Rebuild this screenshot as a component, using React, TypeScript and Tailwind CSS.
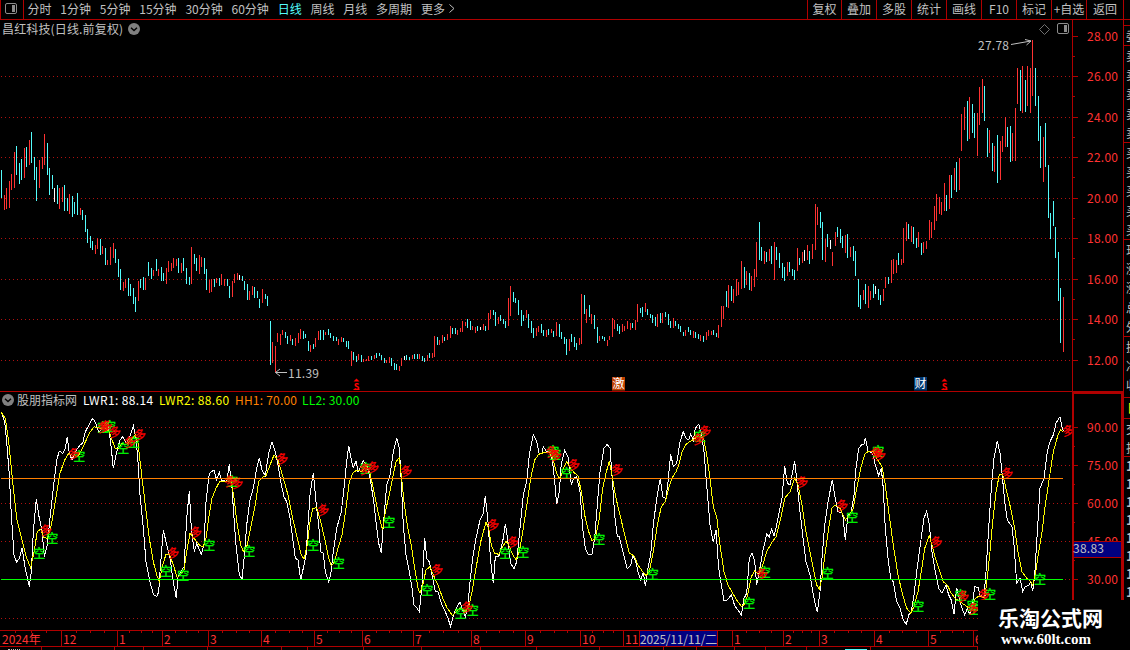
import type { ReactNode } from "react";

const FONT = "font-['Noto_Sans_CJK_SC','Liberation_Sans',sans-serif]";

const RED = "#ff3232";
const CYAN = "#54fcfc";
const LINE = "#b00000";
const GREY = "#c0c0c0";

const periods = ["分时", "1分钟", "5分钟", "15分钟", "30分钟", "60分钟", "日线", "周线", "月线", "多周期"];

const actions = [
  { label: "复权", width: "w-[34px]" },
  { label: "叠加", width: "w-[35px]" },
  { label: "多股", width: "w-[35px]" },
  { label: "统计", width: "w-[35px]" },
  { label: "画线", width: "w-[35px]" },
  { label: "F10", width: "w-[35px]" },
  { label: "标记", width: "w-[35px]" },
  { label: "+自选", width: "w-[35px]" },
  { label: "返回", width: "w-[37px]" },
];

// each bar: x high low colour (r = up, c = down, w = flat)
const bars = `
1 170 198 c,4 195 210 r,6 188 209 r,9 181 208 r,11 174 190 r,14 152 188 r,16 146 175 c,19 163 184 c,21 159 180 c,24 148 178 r,
26 147 167 c,29 140 165 r,31 132 163 c,34 157 180 c,36 167 201 c,39 160 188 r,42 157 169 r,44 134 165 r,47 143 175 c,49 168 195 c,
52 175 189 c,54 188 202 w,57 185 204 c,59 188 209 r,62 187 202 r,64 185 211 c,67 198 211 c,69 194 214 r,72 196 217 c,74 202 214 c,
77 193 215 c,80 208 215 r,82 210 220 c,85 215 232 c,87 229 243 c,90 236 248 c,92 241 250 c,95 245 254 r,97 238 249 r,100 239 255 c,
102 246 254 r,105 248 265 c,107 260 265 r,110 247 265 r,113 243 258 r,115 249 263 c,118 259 277 c,120 269 290 c,123 282 291 r,125 279 288 r,
128 278 296 c,130 284 296 c,133 288 304 c,135 297 312 c,138 281 301 r,140 279 288 c,143 277 290 c,145 278 290 r,148 262 276 c,151 268 279 c,
153 270 276 r,156 259 271 c,158 269 276 r,161 267 281 c,163 273 281 c,166 268 284 r,168 261 272 r,171 263 271 r,173 258 268 r,176 259 266 r,
178 258 273 c,181 263 273 r,183 258 271 c,186 268 284 c,189 277 285 c,191 247 284 r,194 254 264 c,196 258 271 c,199 255 274 r,201 257 267 r,
204 258 274 c,206 269 290 c,209 280 293 r,211 279 292 r,214 279 287 c,216 278 283 r,219 278 286 c,221 274 285 r,224 279 286 r,227 279 286 c,
229 286 298 c,232 281 297 r,234 274 283 r,237 273 280 r,239 275 280 w,242 276 281 c,244 281 290 c,247 284 300 c,249 291 300 r,252 286 295 r,
254 287 298 c,257 291 298 c,259 299 308 c,262 289 303 r,265 294 299 c,267 296 306 c,270 321 365 c,272 342 363 r,275 346 372 r,277 333 342 r,
280 334 345 r,282 330 335 r,285 332 338 c,287 336 344 c,290 335 341 r,292 339 345 c,295 338 346 r,298 333 343 r,300 329 339 r,303 331 339 c,
305 334 338 c,308 341 351 c,310 345 352 r,313 344 349 c,315 338 347 r,318 331 340 r,320 330 340 c,323 330 340 c,325 332 335 r,328 329 335 c,
330 333 338 c,333 336 341 c,336 337 341 c,338 339 345 r,341 337 342 r,343 338 342 c,346 341 347 c,348 341 349 c,351 351 366 r,353 352 360 c,
356 356 362 c,358 354 360 r,361 355 362 c,363 359 362 r,366 359 361 r,368 356 361 r,371 356 360 c,374 355 359 r,376 353 358 c,379 353 356 c,
381 355 360 c,384 358 363 c,386 360 363 r,389 357 363 r,391 358 366 c,394 363 370 c,396 364 370 c,399 366 371 r,401 358 366 r,404 356 360 w,
406 355 360 c,409 357 360 c,412 355 359 r,414 354 359 c,417 354 359 c,419 354 359 r,422 356 361 c,424 358 362 c,427 355 361 r,429 353 358 c,
432 353 358 r,434 336 357 r,437 337 345 c,439 340 345 r,442 335 343 r,444 337 341 c,447 334 340 r,450 326 338 r,452 328 334 c,455 328 334 c,
457 330 335 r,460 328 332 r,462 321 332 r,465 322 326 r,467 319 328 c,470 321 330 c,472 326 330 r,475 327 333 r,477 326 331 c,480 327 330 w,
483 324 330 r,485 326 331 c,488 313 330 r,490 310 319 r,493 310 315 c,495 312 326 c,498 317 324 r,500 315 321 c,503 319 324 c,505 321 328 c,
508 298 326 r,510 286 316 r,513 292 302 c,515 298 303 c,518 300 315 c,521 310 326 c,523 315 321 c,526 310 318 r,528 314 328 c,531 321 333 c,
533 328 338 c,536 328 336 r,538 326 332 r,541 324 333 c,543 330 336 c,546 330 337 r,548 329 335 c,551 329 333 r,553 331 337 c,556 322 336 r,
559 324 337 c,561 332 339 c,564 337 344 c,566 339 355 c,569 339 351 r,571 334 342 c,574 337 347 c,576 343 350 c,579 338 345 r,581 294 344 r,
584 295 314 c,586 309 323 r,589 305 317 c,591 314 324 r,594 315 329 c,597 327 343 c,599 336 341 r,602 336 339 c,604 337 341 c,607 340 346 r,
609 336 340 r,612 318 337 r,614 320 329 r,617 324 331 c,619 326 334 c,622 324 332 r,624 326 331 r,627 321 329 r,630 323 330 r,632 323 328 c,
635 320 330 r,637 304 322 r,640 308 313 c,642 307 317 c,645 303 312 r,647 309 315 c,650 314 318 c,652 315 323 c,655 317 326 c,657 314 327 r,
660 313 323 c,662 313 323 r,665 312 317 c,668 314 325 c,670 321 328 c,673 318 328 r,675 321 326 c,678 324 329 c,680 326 332 c,683 332 336 c,
685 330 336 r,688 327 332 c,690 330 335 c,693 331 338 r,695 332 338 c,698 334 339 c,700 335 341 r,703 336 342 c,706 332 340 r,708 330 336 r,
711 331 335 r,713 330 335 c,716 333 337 c,718 325 338 r,721 306 327 r,723 306 319 r,726 291 307 c,728 285 308 r,731 286 301 c,733 289 303 r,
736 279 296 r,738 282 295 r,741 261 289 r,744 267 288 c,746 271 285 r,749 273 290 c,751 276 291 r,754 269 287 r,756 242 277 r,759 222 260 c,
761 247 261 c,764 251 264 r,766 252 262 c,769 249 261 r,771 246 264 c,774 242 280 r,776 247 260 c,779 253 268 c,782 263 278 c,784 267 281 c,
787 262 276 r,789 262 272 c,792 269 276 c,794 270 280 c,797 248 271 r,799 258 265 c,802 252 263 r,804 250 261 w,807 245 260 r,809 251 264 c,
812 244 259 r,815 204 250 r,817 207 225 r,820 212 228 c,822 222 260 c,825 239 262 r,827 234 247 c,830 240 249 w,832 252 266 r,835 232 246 r,
837 227 237 c,840 229 243 c,842 236 248 c,845 235 253 r,847 234 258 c,850 247 257 r,853 246 261 c,855 251 276 c,858 279 307 c,860 295 309 c,
863 290 300 r,865 284 304 c,868 286 308 r,870 291 300 r,873 284 298 c,875 286 294 w,878 289 300 c,880 295 305 c,883 289 301 r,885 277 288 r,
888 277 284 c,891 260 283 r,893 259 274 r,896 260 273 r,898 253 265 c,901 259 265 r,903 228 263 r,906 222 241 r,908 224 239 c,911 226 242 r,
913 227 244 c,916 238 248 c,918 232 247 r,921 243 255 c,923 242 253 r,926 241 249 r,929 220 240 r,931 222 238 r,934 206 230 r,936 194 221 r,
939 197 214 r,941 202 215 r,944 183 211 r,946 195 211 c,949 175 209 r,951 175 198 c,954 168 190 r,956 162 192 c,959 158 190 r,961 114 151 r,
964 107 130 r,967 101 141 c,969 97 139 r,972 104 133 c,974 113 138 c,977 113 156 r,979 87 125 r,982 79 113 r,984 86 121 c,987 128 157 c,
989 130 153 r,992 143 171 c,994 146 172 r,997 135 183 c,1000 141 180 r,1002 136 152 r,1005 117 147 r,1007 127 147 c,1010 126 162 c,1012 133 161 r,
1015 108 161 r,1017 68 104 r,1020 70 111 c,1022 66 113 r,1025 80 112 c,1027 66 106 r,1030 68 113 r,1032 40 96 r,1035 68 106 c,1038 96 141 c,
1040 126 168 c,1043 137 182 r,1045 123 167 c,1048 165 218 c,1050 213 239 c,1053 201 226 c,1055 227 258 c,1058 252 301 c,1060 288 343 c,1063 297 352 r
`
  .split(",")
  .map((row) => {
    const [x, high, low, kind] = row.trim().split(" ");
    return { x: +x, high: +high, low: +low, color: kind === "r" ? RED : kind === "c" ? CYAN : "#ffffff" };
  });

type Segment = [origin: number, points: string];

// indicator samples are kept in thirds of a pixel, relative to each segment's origin
const lwr1: Segment[] = [
  [0, "4,80 14,110 20,170 28,270 34,390 42,510 50,532 58,520 66,490 76,550 88,605 94,560 100,440 109,342 118,400 126,435 133,515 142,480 150,400 160,310 170,225 178,198 188,205 196,190 202,155 208,205 216,225 226,200 240,180 248,175 256,140 264,125 278,100 286,112 296,142 306,132 316,115 326,130 334,190 340,250 350,200 360,165 368,155 378,175 388,160 400,122 408,160 414,230 420,330 430,430 438,530 450,590 460,628 470,635 476,620 480,560 490,435 500,480 510,520 520,590 529,640 534,575 542,560 552,545 560,400 568,318 574,430 583,500 590,475 604,508 612,480 618,350 628,265 642,255 650,285 658,262 664,285 680,290 688,238 696,310 702,400 708,480 718,570 726,582 734,500 740,420 750,345 760,310 768,260 778,218 786,255 796,272 806,205 816,170 826,200 834,240 842,290 852,335"],
  [270, "50,350 60,400 68,460 76,520 84,525 92,585 100,550 108,510 114,420 120,330 130,263 138,350 146,420 152,500 160,505 166,560 176,590 182,570 190,500 200,430 214,380 222,310 230,230 236,182 244,225 250,248 258,228 264,260 280,228 290,240 300,280 310,340 318,410 326,475 334,505 340,420 350,300 360,270 370,200 380,160 388,190 394,290 400,420 408,510 418,560 426,610 432,660 440,668 448,680 456,600 464,460 470,520 478,530 486,570 496,620 504,620 514,655 526,680 534,700 542,725 548,700 556,675 570,650 578,675 586,695 594,660 600,590 608,520 618,460 630,405 640,385 646,332 654,410 662,530 670,595 676,515 686,515 698,470 706,416 714,470 722,535 732,552 740,530 750,430 760,330 770,290 778,210 790,150 800,168 808,208 816,205 820,185 830,200 840,200 848,235 854,290"],
  [500, "170,358 178,320 184,235 194,197 204,215 214,298 222,278 230,275 240,320 248,430 256,490 264,508 276,508 284,460 292,360 300,260 312,190 322,178 330,190 338,300 344,390 352,455 358,455 366,490 374,520 382,552 392,540 398,512 406,525 414,560 422,585 430,562 436,604 444,550 452,510 460,420 470,340 481,280 488,335 498,340 504,290 512,208 520,245 530,235 540,170 550,140 558,160 566,165 572,148 580,165 586,130 596,118 604,145 612,200 620,300 630,420 640,472 648,435 656,550 664,600 672,648 682,645 694,630 704,662 716,678 724,690 732,640 740,625 748,520 756,503 764,530 770,600 778,560 788,500 800,448 808,455 815,432 822,452 830,420 846,340"],
  [730, "164,243 172,295 180,300 194,228 202,300 210,380 218,450 228,530 240,570 252,640 262,682 270,620 276,520 284,420 294,350 307,285 314,330 324,380 338,385 346,465 354,390 364,380 372,330 378,250 386,190 396,178 402,178 406,158 414,198 428,205 436,240 446,272 454,250 460,310 466,430 474,520 482,580 490,590 500,650 510,670 520,705 529,718 536,690 544,680 552,630 560,560 572,470 582,400 590,378 598,420 606,500 616,560 626,610 636,625 648,600 656,630 664,645 672,688 680,608 688,640 696,670 704,690 712,670 720,690 730,640"],
  [910, "194,605 204,607 210,630 222,635 228,560 236,430 244,310 252,220 262,168 270,205 278,285 284,350 292,405 306,425 312,480 320,595 330,580 338,620 346,605 358,600 362,590 368,618 374,570 380,470 390,310 402,280 412,200 420,170 430,150 438,115 450,95 456,125 460,138"],
];

const lwr2: Segment[] = [
  [0, "4,82 16,100 26,170 38,290 50,400 60,440 70,480 80,520 92,548 102,500 112,440 122,432 132,458 142,460 152,430 166,350 180,265 194,225 206,205 216,210 230,215 240,205 254,175 268,145 282,125 300,130 316,128 328,140 338,170 346,190 356,190 366,175 380,180 392,165 406,150 414,175 424,260 436,360 448,460 460,530 470,570 478,590 488,540 498,508 508,508 520,540 532,578 542,568 552,555 560,500 570,445 578,455 590,470 600,482 610,485 618,460 626,400 636,340 648,310 660,288 680,288 694,290 702,340 712,420 722,480 730,500 742,480 754,420 766,360 776,290 786,278 798,272"],
  [270, "0,240 12,210 24,225 40,280 54,330 68,400 82,460 94,510 102,522 112,480 120,410 128,370 140,368 152,410 166,470 176,520 184,542 194,530 204,490 216,450 228,370 238,290 250,262 262,255 276,260 288,240 300,265 312,320 326,390 338,435 346,380 358,330 370,270 378,230 388,218 394,270 402,350 412,420 424,480 434,550 444,610 450,625 458,600 468,555 480,545 490,570 504,600 518,640 532,670 548,692 558,680 572,668 586,680 596,665 606,620 618,550 632,470 648,412 656,430 664,480 674,505 686,508 698,485 708,468 716,480 726,505 738,525 748,500 758,440 772,350 782,280 794,225 806,208 824,202 840,204"],
  [500, "160,225 170,265 180,283 190,250 200,230 212,250 224,265 234,272 244,320 256,400 266,440 276,468 286,460 298,400 308,310 318,265 328,228 336,270 348,340 360,390 374,450 388,505 402,512 414,540 428,560 438,572 448,560 460,500 472,420 484,365 496,350 506,310 516,280 528,260 536,240 546,200 558,178 572,168 586,160 600,148 612,165 620,210 630,280 640,365 650,395 660,480 672,560 684,600 698,625 712,648 724,664 734,658 744,625 754,575 764,558 776,570 788,540 800,500 814,475 828,455 842,400"],
  [730, "164,340 180,320 194,278 204,300 216,360 226,430 238,490 250,550 260,600 268,612 276,580 286,500 296,430 306,370 316,360 330,370 346,405 358,390 370,370 380,310 392,250 404,208 416,198 430,200 440,220 456,245 466,300 476,380 490,480 504,570 518,630 530,670 542,684 552,665 564,620 574,560 584,490 598,452 606,480 616,520 628,555 640,590 652,600 664,625 676,640 690,650 704,660 716,668 728,660"],
  [910, "196,640 210,632 224,640 232,580 240,500 248,410 258,320 268,270 278,268 290,320 302,370 314,430 324,500 336,560 350,580 362,590 368,600 376,570 386,500 396,440 406,360 418,280 430,200 444,150 452,135 460,140"],
];

const longMarks: Segment[] = [
  [0, "222,207 138,437 310,128 320,124 345,142 420,150 390,172 520,505 588,443 690,290 712,295 847,222"],
  [270, "160,376 285,254 310,248 409,260 502,555 592,668 670,420 730,472 845,201 858,212"],
  [500, "222,240 352,255 596,164 616,140 786,568"],
  [730, "217,292 337,362 438,205 450,210 620,472 700,635 730,672"],
  [910, "292,266 222,630 475,138"],
];

const shortMarks: Segment[] = [
  [0, "238,215 118,505 157,460 310,128 330,125 370,190 402,172 498,560 550,570 628,480 697,288 748,498"],
  [270, "130,482 206,535 288,250 358,412 472,615 572,685 608,677 706,505 760,502 850,200 856,208"],
  [500, "200,265 298,462 458,567 600,155 748,655 794,562"],
  [730, "293,565 367,398 445,200 565,665 692,632 728,662 732,674"],
  [910, "240,628 390,582"],
];

function toPoints(segments: Segment[]) {
  return segments.flatMap(([origin, points]) =>
    points.split(" ").map((p) => {
      const [x, y] = p.split(",").map(Number);
      return { x: origin + x / 3, y: 385 + y / 3 };
    })
  );
}

function toPath(segments: Segment[]) {
  return toPoints(segments)
    .map((p) => `${p.x.toFixed(1)},${p.y.toFixed(1)}`)
    .join(" ");
}

const months = [
  { label: "2024年", width: 61 },
  { label: "12", width: 56 },
  { label: "1", width: 45 },
  { label: "2", width: 46 },
  { label: "3", width: 53 },
  { label: "4", width: 53 },
  { label: "5", width: 48 },
  { label: "6", width: 51 },
  { label: "7", width: 58 },
  { label: "8", width: 54 },
  { label: "9", width: 55 },
  { label: "10", width: 43 },
  { label: "11", width: 16 },
  { label: "2025/11/11/二", width: 93, current: true },
  { label: "1", width: 51 },
  { label: "2", width: 36 },
  { label: "3", width: 55 },
  { label: "4", width: 54 },
  { label: "5", width: 45 },
  { label: "6", width: 5 },
];

const tabWidths = [42, 73, 29, 64, 74, 26, 56, 58, 59, 56, 63, 64, 33, 38, 31, 41, 64, 107];

const priceTicks = [36, 76, 117, 157, 198, 238, 279, 319, 360];
const lwrTicks = [427, 465, 503, 541, 579];

function PanelIcon() {
  return (
    <svg className="block h-3 w-3" viewBox="0 0 12 12">
      <rect x="0.5" y="0.5" width="11" height="10" rx="1.5" fill="none" stroke="#8c8c8c" />
      <rect x="7" y="2" width="3" height="7" fill="#8c8c8c" />
    </svg>
  );
}

function ChevronBadge() {
  return (
    <svg className="block h-3 w-3" viewBox="0 0 12 12">
      <circle cx="6" cy="6" r="6" fill="#808080" />
      <path d="M3 4.8 L6 7.5 L9 4.8" fill="none" stroke="#000" strokeWidth="1.4" />
    </svg>
  );
}

function Toolbar() {
  return (
    <div className="flex h-5 shrink-0 justify-between border-b border-[#b00000] text-[#c0c0c0]">
      <div className="flex">
        <div className="flex h-full w-6 border-x border-[#b00000] pt-[3px] pl-1">
          <PanelIcon />
        </div>
        <div className="flex gap-[8.8px] pl-[3.5px] leading-[17px]">
          {periods.map((p) => (
            <span key={p} className={p === "日线" ? "text-[#54fcfc]" : ""}>
              {p}
            </span>
          ))}
          <span className="flex">
            更多
            <svg className="mt-1 ml-1 h-[9px] w-[6px]" viewBox="0 0 6 9">
              <path d="M0.5 0.5 L5 4.5 L0.5 8.5" fill="none" stroke={GREY} />
            </svg>
          </span>
        </div>
      </div>
      <div className="flex leading-[17px]">
        {actions.map((a) => (
          <div key={a.label} className={`${a.width} shrink-0 border-l border-[#b00000] text-center whitespace-nowrap`}>
            {a.label}
          </div>
        ))}
        <div className="w-[7px] border-l border-[#b00000]" />
      </div>
    </div>
  );
}

function GridLine({ y }: { y: number }) {
  return <line x1="1" x2="1071" y1={y + 0.5} y2={y + 0.5} stroke="#b01010" strokeDasharray="1 3" />;
}

function DividendMark({ x }: { x: number }) {
  return (
    <g fill="#ff0000">
      <path d={`M${x - 3} 381.5 L${x} 378.5 L${x + 3} 381.5 Z`} />
      <text x={x} y="389.5" textAnchor="middle" fontSize="9" fontWeight="bold">
        S
      </text>
      <path d={`M${x - 3} 389.5 H${x + 3}`} stroke="#ff0000" />
    </g>
  );
}

function EventBadge({ x, fill, children }: { x: number; fill: string; children: ReactNode }) {
  return (
    <g>
      <rect x={x} y="377" width="13" height="13.5" fill={fill} />
      <text x={x + 6.5} y="388" textAnchor="middle" fontSize="12" fill="#fff">
        {children}
      </text>
    </g>
  );
}

function PriceChart() {
  return (
    <div className="relative h-full w-[1072px]">
      <svg className="absolute inset-0 h-full w-full" viewBox="0 20 1072 371">
        <g shapeRendering="crispEdges">
          {priceTicks.slice(1).map((y) => (
            <GridLine key={y} y={y} />
          ))}
          {bars.map((b) => (
            <rect key={b.x} x={b.x} y={b.high} width="1" height={b.low - b.high} fill={b.color} />
          ))}
        </g>
        <g fill="none" stroke={GREY}>
          <path d="M1011 44.5 L1031 41 M1025 39.5 L1031 41 L1026.5 45" />
          <path d="M275.5 372.5 H287 M280 369 L275.5 372.5 L280 376" />
          <path d="M1044.5 24.5 L1049.5 29.5 L1044.5 34.5 L1039.5 29.5 Z" stroke="#707070" />
        </g>
        <g fill={GREY} fontSize="12">
          <text x="978" y="50" textLength="31">27.78</text>
          <text x="288" y="378" textLength="31">11.39</text>
        </g>
        <DividendMark x={356.5} />
        <DividendMark x={944.5} />
        <EventBadge x={612} fill="#c04000">激</EventBadge>
        <EventBadge x={914} fill="#003870">财</EventBadge>
      </svg>
      <div className="relative flex items-center justify-between pr-[3px] pl-0.5 leading-[18px] text-[#c0c0c0]">
        <div className="flex items-center gap-[5px]">
          <span className="tracking-[0.15px]">昌红科技(日线.前复权)</span>
          <ChevronBadge />
        </div>
        <PanelIcon />
      </div>
    </div>
  );
}

function PriceAxis() {
  return (
    <svg className="block h-full w-[51px]" viewBox="1072 20 51 371">
      <g stroke={LINE} shapeRendering="crispEdges">
        <line x1="1072.5" x2="1072.5" y1="20" y2="391" />
        {priceTicks.map((y) => (
          <line key={y} x1="1073" x2="1078" y1={y + 0.5} y2={y + 0.5} />
        ))}
        {priceTicks.slice(0, -1).map((y) => (
          <line key={y} x1="1073" x2="1075" y1={y + 20.5} y2={y + 20.5} />
        ))}
      </g>
      <g fill={RED} fontSize="12">
        {priceTicks.map((y, i) => (
          <text key={y} x="1087" y={y + 5} textLength="31">
            {(28 - i * 2).toFixed(2)}
          </text>
        ))}
      </g>
    </svg>
  );
}

function LwrChart() {
  return (
    <div className="relative h-full w-[1072px]">
      <svg className="absolute inset-0 h-full w-full overflow-visible" viewBox="0 392 1072 238">
        <g shapeRendering="crispEdges">
          {[...lwrTicks, 618].map((y) => (
            <GridLine key={y} y={y} />
          ))}
          <polyline points={toPath(lwr1)} fill="none" stroke="#ffffff" />
          <polyline points={toPath(lwr2)} fill="none" stroke="#ffff00" />
        </g>
        <g fontSize="12" textAnchor="middle" strokeWidth="0.3">
          {toPoints(shortMarks).map((p, i) => (
            <text key={i} x={p.x} y={p.y + 4.5} fill="#00ff00" stroke="#00ff00">空</text>
          ))}
          {toPoints(longMarks).map((p, i) => (
            <text key={i} x={p.x} y={p.y + 4} fill="#ff0000" stroke="#ff0000" transform={`rotate(-12 ${p.x} ${p.y})`}>
              多
            </text>
          ))}
        </g>
        <g shapeRendering="crispEdges">
          <line x1="1" x2="1063" y1="478.5" y2="478.5" stroke="#ff8000" />
          <line x1="1" x2="1063" y1="579.5" y2="579.5" stroke="#00ff00" />
        </g>
      </svg>
      <div className="relative flex items-center pl-0.5 leading-4">
        <ChevronBadge />
        <span className="ml-[3px] w-[66px] text-[#c0c0c0]">股朋指标网</span>
        <span className="w-[76px] tracking-[0.36px] whitespace-nowrap text-white">LWR1: 88.14</span>
        <span className="w-[76px] tracking-[0.36px] whitespace-nowrap text-[#ffff00]">LWR2: 88.60</span>
        <span className="w-[67px] tracking-[0.2px] whitespace-nowrap text-[#ff8000]">HH1: 70.00</span>
        <span className="tracking-[0.2px] whitespace-nowrap text-[#00ff00]">LL2: 30.00</span>
      </div>
    </div>
  );
}

function LwrAxis() {
  return (
    <svg className="relative block h-[208px] w-[51px]" viewBox="1072 392 51 208">
      <g shapeRendering="crispEdges">
        <path d="M1073 600 V393 H1122 V600" fill="none" stroke={LINE} strokeWidth="2" />
        {lwrTicks.map((y) => (
          <line key={y} x1="1074" x2="1078" y1={y + 0.5} y2={y + 0.5} stroke={LINE} />
        ))}
        {lwrTicks.slice(0, -1).map((y) => (
          <line key={y} x1="1074" x2="1075" y1={y + 19.5} y2={y + 19.5} stroke={LINE} />
        ))}
      </g>
      <g fill={RED} fontSize="12">
        {lwrTicks.map((y, i) => (
          <text key={y} x="1087" y={y + 5} textLength="31">
            {(90 - i * 15).toFixed(2)}
          </text>
        ))}
      </g>
      <rect x="1073.5" y="541.5" width="48" height="16" fill="#000080" stroke={LINE} shapeRendering="crispEdges" />
      <text x="1073" y="553" fontSize="12" fill={GREY} textLength="31">
        38.83
      </text>
    </svg>
  );
}

function TimeAxis() {
  return (
    <div className="flex h-[17px] w-[978px] overflow-hidden border-y border-[#b00000] leading-[15px] text-[#ff3232]">
      {months.map((m, i) => (
        <div
          key={i}
          className={`relative shrink-0 overflow-visible whitespace-nowrap ${i > 0 ? "border-l border-[#b00000] pl-px" : "pl-0.5"}`}
          style={{ width: m.width }}
        >
          {m.width > 30 &&
            !m.current &&
            [1, 2, 3].map((n) => (
              <span key={n} className="absolute top-0 h-0.5 w-px bg-[#b00000]" style={{ left: (m.width * n) / 4 }} />
            ))}
          {m.current ? (
            <span className="-ml-px block h-[15px] w-[78px] border-r border-[#b00000] bg-[#000080] tracking-[-0.2px] text-[#c0c0c0]">
              {m.label}
            </span>
          ) : (
            m.label
          )}
        </div>
      ))}
    </div>
  );
}

// top edge of the tab row that continues below the window
function TabRow() {
  return (
    <div className="flex h-[3px] w-[978px] overflow-hidden">
      {tabWidths.map((width, i) => (
        <div key={i} className="h-full shrink-0 border-r border-[#b00000]" style={{ width }}>
          {i === 0 && <div className="mt-0.5 ml-2 h-px w-3 border-b border-dotted border-[#c0c0c0]" />}
          {i === 16 && <div className="mt-0.5 ml-[38px] h-px w-[22px] border-b border-[#54fcfc]" />}
        </div>
      ))}
    </div>
  );
}

// neighbouring quote panel, only its left edge is visible
function QuoteStrip() {
  return (
    <div className="h-[580px] w-[7px] shrink-0 overflow-hidden border-l border-[#b00000] pl-0.5 whitespace-nowrap text-[#c0c0c0]">
      <div className="-ml-0.5 h-[6px] border-b border-[#b00000]" />
      <div className="-ml-0.5 h-5 border-b border-[#b00000] pl-0.5 leading-5">委比</div>
      {["卖", "买"].map((side) => (
        <div key={side} className="-ml-0.5 h-[97px] border-b border-[#b00000] pl-0.5">
          {["一", "二", "三", "四", "五"].map((n) => (
            <div key={n} className="h-[19.2px] leading-[19px]">{side + n}</div>
          ))}
        </div>
      ))}
      <div className="-ml-0.5 h-[97px] border-b border-[#b00000] pl-0.5">
        {["现价", "涨跌", "涨幅", "总量", "外盘"].map((t) => (
          <div key={t} className="h-[19.2px] leading-[19px]">{t}</div>
        ))}
      </div>
      <div className="-ml-0.5 h-[61px] border-b border-[#b00000] pl-0.5">
        {["换手", "净资", "收益"].map((t) => (
          <div key={t} className="h-[19.2px] leading-[19px]">{t}</div>
        ))}
      </div>
      <div className="-ml-0.5 h-[21px] border-b border-[#b00000] pl-[3px] leading-5 text-[#ffff00]">日</div>
      <div className="-ml-0.5 h-[38px] border-b border-[#b00000] pl-0.5 leading-[19px]">
        <div>交易</div>
        <div>指标</div>
      </div>
      {[0, 1, 2, 3, 4, 5, 6, 7].map((n) => (
        <div key={n} className="h-[18px] text-[13px] leading-[18px] font-bold">14</div>
      ))}
    </div>
  );
}

export default function App() {
  return (
    <div className={`relative flex h-[650px] w-[1130px] flex-col overflow-hidden bg-black text-[12px] ${FONT}`}>
      <Toolbar />
      <div className="flex">
        <div className="flex w-[1123px] shrink-0 flex-col">
          <div className="flex h-[372px] border-b border-[#b00000]">
            <PriceChart />
            <PriceAxis />
          </div>
          <div className="flex h-[238px]">
            <LwrChart />
            <LwrAxis />
          </div>
          <TimeAxis />
          <TabRow />
        </div>
        <QuoteStrip />
      </div>

      <div className="absolute right-0 bottom-0 flex h-[50px] w-[152px] flex-col bg-black pt-[3px] pl-5 text-white">
        <span className="text-[21px] leading-7 font-bold">乐淘公式网</span>
        <span className="mt-0.5 pl-[3px] font-['Liberation_Serif',serif] text-[15px] leading-3 font-bold">www.60lt.com</span>
      </div>
    </div>
  );
}
